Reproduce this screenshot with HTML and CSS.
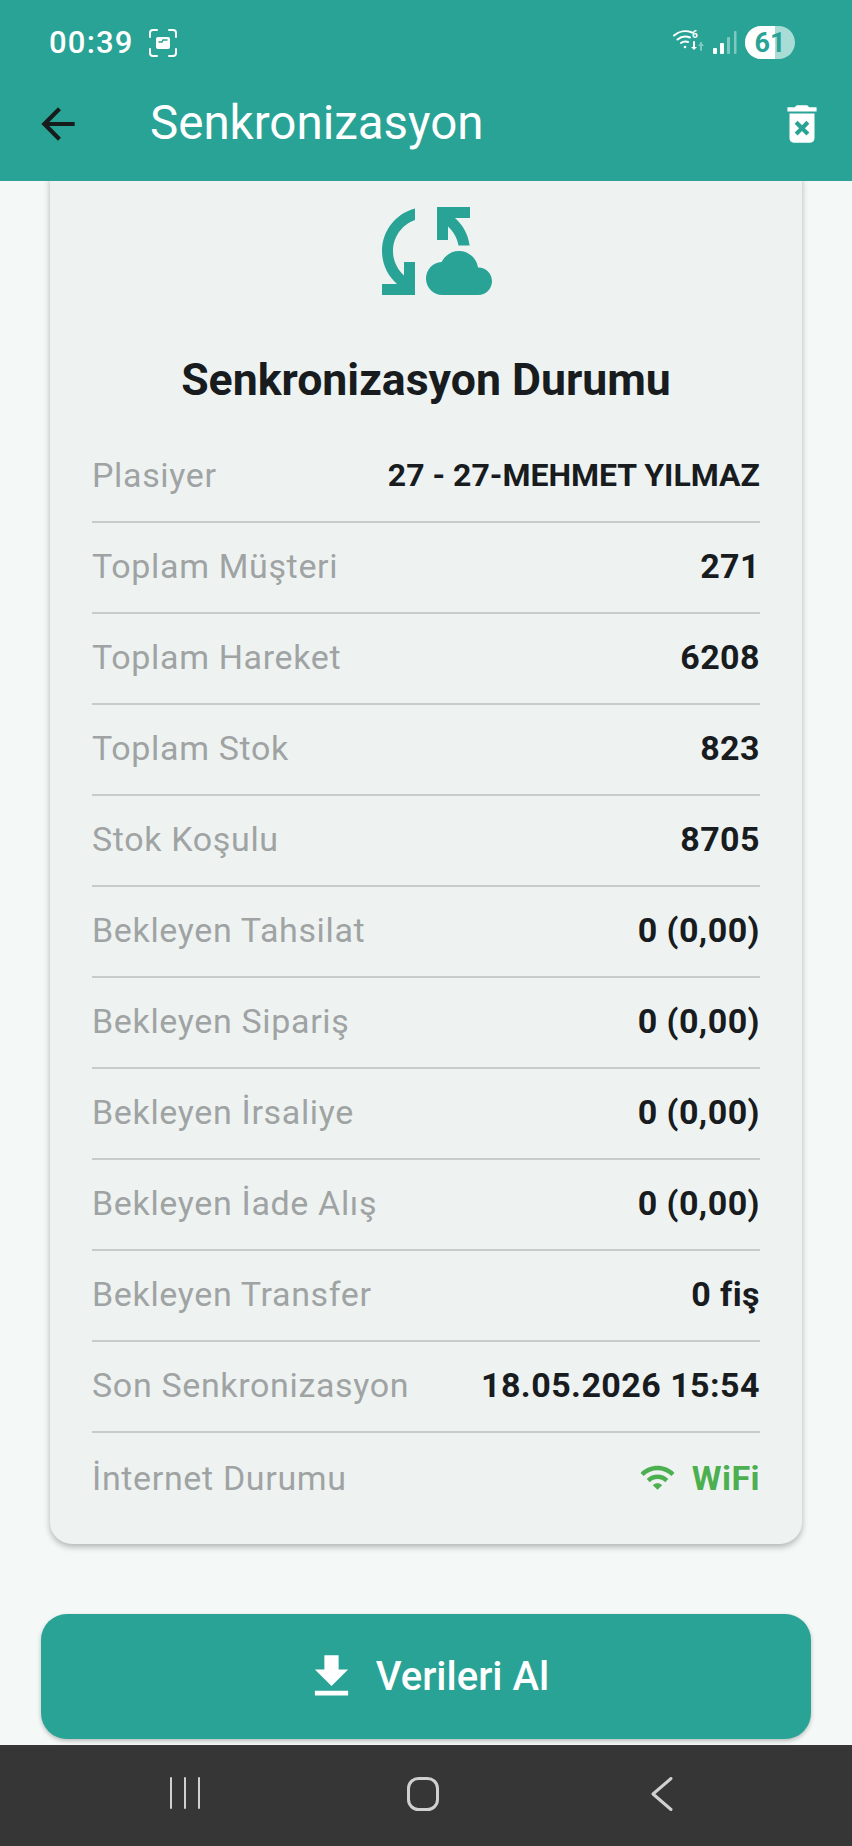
FILE: index.html
```html
<!DOCTYPE html>
<html lang="tr">
<head>
<meta charset="utf-8">
<title>Senkronizasyon</title>
<link rel="stylesheet" href="styles.css">
</head>
<body>
<header class="top">
  <div class="status">
    <div class="status-left">
      <span class="time">00:39</span>
      <svg class="shot" viewBox="0 0 28 28" fill="none" stroke="#fff" stroke-width="2" stroke-linecap="round"><path d="M1 8V4a3 3 0 0 1 3-3h4M20 1h4a3 3 0 0 1 3 3v4M27 20v4a3 3 0 0 1-3 3h-4M8 27H4a3 3 0 0 1-3-3v-4"/><rect x="7" y="8" width="14" height="12" rx="2" fill="#fff" stroke="none"/><path d="M10 13h3l1-2h4" stroke="#27a496" stroke-width="1.5"/></svg>
    </div>
    <div class="status-right">
      <svg class="swifi" viewBox="0 0 32 24" fill="none" stroke="#fff" stroke-width="2" stroke-linecap="round"><path d="M1 6.500C6 2 13 1 19 3.500M4.500 10.500C8 7.500 13 7 17 8.500M8 14c2-1.500 4.500-1.700 7-1"/><circle cx="12" cy="18" r="1.300" fill="#fff" stroke="none"/><text x="19" y="9" class="six">6</text><path d="M21 13v6" /><path d="M18 18h6l-3 3z" fill="#fff" stroke="none"/><path d="M28 14v7" stroke="#7fc9c0"/><path d="M25 17l3-4 3 4z" fill="#7fc9c0" stroke="none"/></svg>
      <svg class="signal" viewBox="0 0 24 24"><rect x="0" y="17" width="4" height="6" rx="1" fill="#fff"/><rect x="7" y="12" width="4" height="11" rx="1" fill="#fff"/><rect x="14" y="6" width="3" height="17" rx="1" fill="#7fc9c0"/><rect x="21" y="0" width="2.500" height="23" rx="1" fill="#7fc9c0"/></svg>
      <div class="battery"><span class="battery-fill"></span><span class="battery-num">61</span></div>
    </div>
  </div>
  <div class="appbar">
    <svg class="back" viewBox="0 0 24 24"><path d="M20 11H7.830l5.590-5.590L12 4l-8 8 8 8 1.410-1.410L7.830 13H20v-2z"/></svg>
    <h1 class="page-title">Senkronizasyon</h1>
    <svg class="trash" viewBox="0 0 24 24"><path d="M6 19c0 1.100.9 2 2 2h8c1.100 0 2-.9 2-2V7H6v12zm2.460-7.120l1.410-1.410L12 12.590l2.120-2.120 1.410 1.410L13.410 14l2.120 2.120-1.410 1.410L12 15.410l-2.120 2.120-1.410-1.410L10.590 14l-2.130-2.120zM15.500 4l-1-1h-5l-1 1H5v2h14V4z"/></svg>
  </div>
</header>

<main class="content">
  <section class="card">
    <svg class="cloud" viewBox="0 0 24 24"><path d="M21.500,14.980c-0.020,0-0.030,0-0.050,0.010C21.200,13.300,19.760,12,18,12c-1.400,0-2.600,0.830-3.160,2.020C13.260,14.100,12,15.400,12,17c0,1.660,1.340,3,3,3l6.500-0.020c1.380,0,2.500-1.120,2.500-2.500S22.880,14.980,21.500,14.980z M10,4.260v2.090C7.670,7.180,6,9.390,6,12c0,1.770,0.780,3.340,2,4.440V14h2v6H4v-2h2.730C5.060,16.540,4,14.400,4,12C4,8.270,6.550,5.150,10,4.260z M20,6h-2.730c1.430,1.260,2.410,3.010,2.660,5l-2.020,0c-0.230-1.360-0.930-2.550-1.910-3.440V10h-2V4h6V6z"/></svg>
    <h2 class="card-title">Senkronizasyon Durumu</h2>
    <dl class="rows">
      <div class="row"><dt>Plasiyer</dt><dd class="name">27 - 27-MEHMET YILMAZ</dd></div>
      <div class="row"><dt>Toplam Müşteri</dt><dd>271</dd></div>
      <div class="row"><dt>Toplam Hareket</dt><dd>6208</dd></div>
      <div class="row"><dt>Toplam Stok</dt><dd>823</dd></div>
      <div class="row"><dt>Stok Koşulu</dt><dd>8705</dd></div>
      <div class="row"><dt>Bekleyen Tahsilat</dt><dd>0 (0,00)</dd></div>
      <div class="row"><dt>Bekleyen Sipariş</dt><dd>0 (0,00)</dd></div>
      <div class="row"><dt>Bekleyen İrsaliye</dt><dd>0 (0,00)</dd></div>
      <div class="row"><dt>Bekleyen İade Alış</dt><dd>0 (0,00)</dd></div>
      <div class="row"><dt>Bekleyen Transfer</dt><dd>0 fiş</dd></div>
      <div class="row"><dt>Son Senkronizasyon</dt><dd>18.05.2026 15:54</dd></div>
      <div class="row"><dt>İnternet Durumu</dt><dd class="online"><svg class="wifi" viewBox="0 0 24 24"><path d="M1 9l2 2c4.970-4.970 13.030-4.970 18 0l2-2C16.930 2.930 7.080 2.930 1 9zm8 8l3 3 3-3c-1.650-1.660-4.340-1.660-6 0zm-4-4l2 2c2.760-2.760 7.240-2.760 10 0l2-2C15.140 9.140 8.870 9.140 5 13z"/></svg>WiFi</dd></div>
    </dl>
  </section>
  <button class="action" type="button">
    <svg class="download" viewBox="0 0 24 24"><path d="M19 9h-4V3H9v6H5l7 7 7-7zM5 18v2h14v-2H5z"/></svg>
    <span>Verileri Al</span>
  </button>
</main>

<nav class="navbar">
  <svg class="nav-recent" viewBox="0 0 30 32"><path d="M1 1v30M15 1v30M29 1v30"/></svg>
  <svg class="nav-home" viewBox="0 0 32 34"><rect x="1.500" y="1.500" width="29" height="31" rx="10"/></svg>
  <svg class="nav-back" viewBox="0 0 22 34"><path d="M20 1.500L2 17l18 15.500"/></svg>
</nav>
</body>
</html>
```

FILE: styles.css
```css
* { box-sizing: border-box; margin: 0; padding: 0; }

html, body { height: 100%; }

body {
  width: 852px;
  height: 1846px;
  display: flex;
  flex-direction: column;
  overflow: hidden;
  background: #f4f9f8;
  font-family: Roboto, "Noto Sans", sans-serif;
}

.top {
  height: 181px;
  flex: none;
  background: #28a396;
  color: #fff;
  position: relative;
  z-index: 1;
}

.status {
  height: 84px;
  padding: 26px 57px 0 49px;
  display: flex;
  justify-content: space-between;
  align-items: flex-start;
}

.status-left, .status-right { display: flex; align-items: center; height: 33px; }
.status-left { gap: 15px; }
.time { font-size: 31px; font-weight: 500; letter-spacing: 1.200px; }
.shot { width: 28px; height: 28px; }
.status-right { gap: 8px; }
.swifi { width: 32px; height: 24px; margin-top: -4px; }
.six { font: 700 10px Roboto, sans-serif; fill: #fff; stroke: none; }
.signal { width: 24px; height: 24px; }

.battery {
  width: 50px;
  height: 33px;
  border-radius: 17px;
  background: #a9dcd5;
  overflow: hidden;
  position: relative;
  display: flex;
  align-items: center;
  justify-content: center;
}
.battery-fill { position: absolute; left: 0; top: 0; bottom: 0; width: 30px; background: #fff; }
.battery-num { position: relative; color: #28a396; font-size: 27px; font-weight: 700; }

.appbar {
  height: 97px;
  padding: 0 11px 18px 33px;
  display: flex;
  align-items: center;
}

.back { width: 50px; height: 50px; fill: #161c1c; flex: none; }
.page-title { font-size: 47.500px; font-weight: 400; margin-left: 67px; flex: 1; line-height: 60px; margin-top: -2px; }
.trash { width: 50px; height: 50px; fill: #fff; flex: none; margin-right: 14px; }

.content {
  flex: 1;
  min-height: 0;
  overflow: hidden;
  display: flex;
  flex-direction: column;
  align-items: center;
}

.card {
  width: 752px;
  height: 1383px;
  flex: none;
  margin-top: -20px;
  padding: 24px 42px 0;
  background: #eef3f2;
  border-radius: 22px;
  box-shadow: 0 3px 6px rgba(0, 0, 0, 0.28);
  display: flex;
  flex-direction: column;
  align-items: center;
}

.cloud { width: 132px; height: 132px; fill: #28a396; flex: none; }

.card-title {
  margin-top: 38px;
  margin-bottom: 27px;
  font-size: 44.600px;
  font-weight: 700;
  line-height: 50px;
  color: #181c1f;
}

.rows { width: 100%; }

.row {
  height: 91px;
  padding-bottom: 4px;
  display: flex;
  justify-content: space-between;
  align-items: center;
  border-bottom: 2px solid #c8cbcb;
}
.row:last-child { border-bottom: 0; padding-bottom: 2px; }

.row dt { font-size: 34px; color: #a0a3a3; letter-spacing: 0.650px; }
.row dd { font-size: 34px; font-weight: 700; color: #181c1f; letter-spacing: 0.450px; }
.row .name { font-size: 32px; letter-spacing: 0; }

.row .online { display: flex; align-items: center; gap: 16px; color: #4caf50; }
.wifi { width: 37px; height: 37px; fill: #4caf50; }

.action {
  width: 770px;
  height: 125px;
  flex: none;
  margin-top: 70px;
  border: 0;
  border-radius: 26px;
  background: #28a396;
  color: #fff;
  box-shadow: 0 2px 4px rgba(0, 0, 0, 0.25);
  display: flex;
  align-items: center;
  justify-content: center;
  gap: 16px;
  font-family: Roboto, sans-serif;
  font-size: 40px;
  font-weight: 500;
}

.download { width: 57px; height: 57px; fill: #fff; }

.navbar {
  height: 101px;
  flex: none;
  background: #353635;
  position: relative;
}

.navbar svg { position: absolute; top: 32px; fill: none; stroke: #d0d0d0; stroke-linecap: round; stroke-linejoin: round; }
.nav-recent { left: 170px; width: 30px; height: 32px; stroke-width: 2; }
.nav-home { left: 407px; width: 32px; height: 34px; stroke-width: 3; }
.nav-back { left: 651px; width: 22px; height: 34px; stroke-width: 3; }
```
